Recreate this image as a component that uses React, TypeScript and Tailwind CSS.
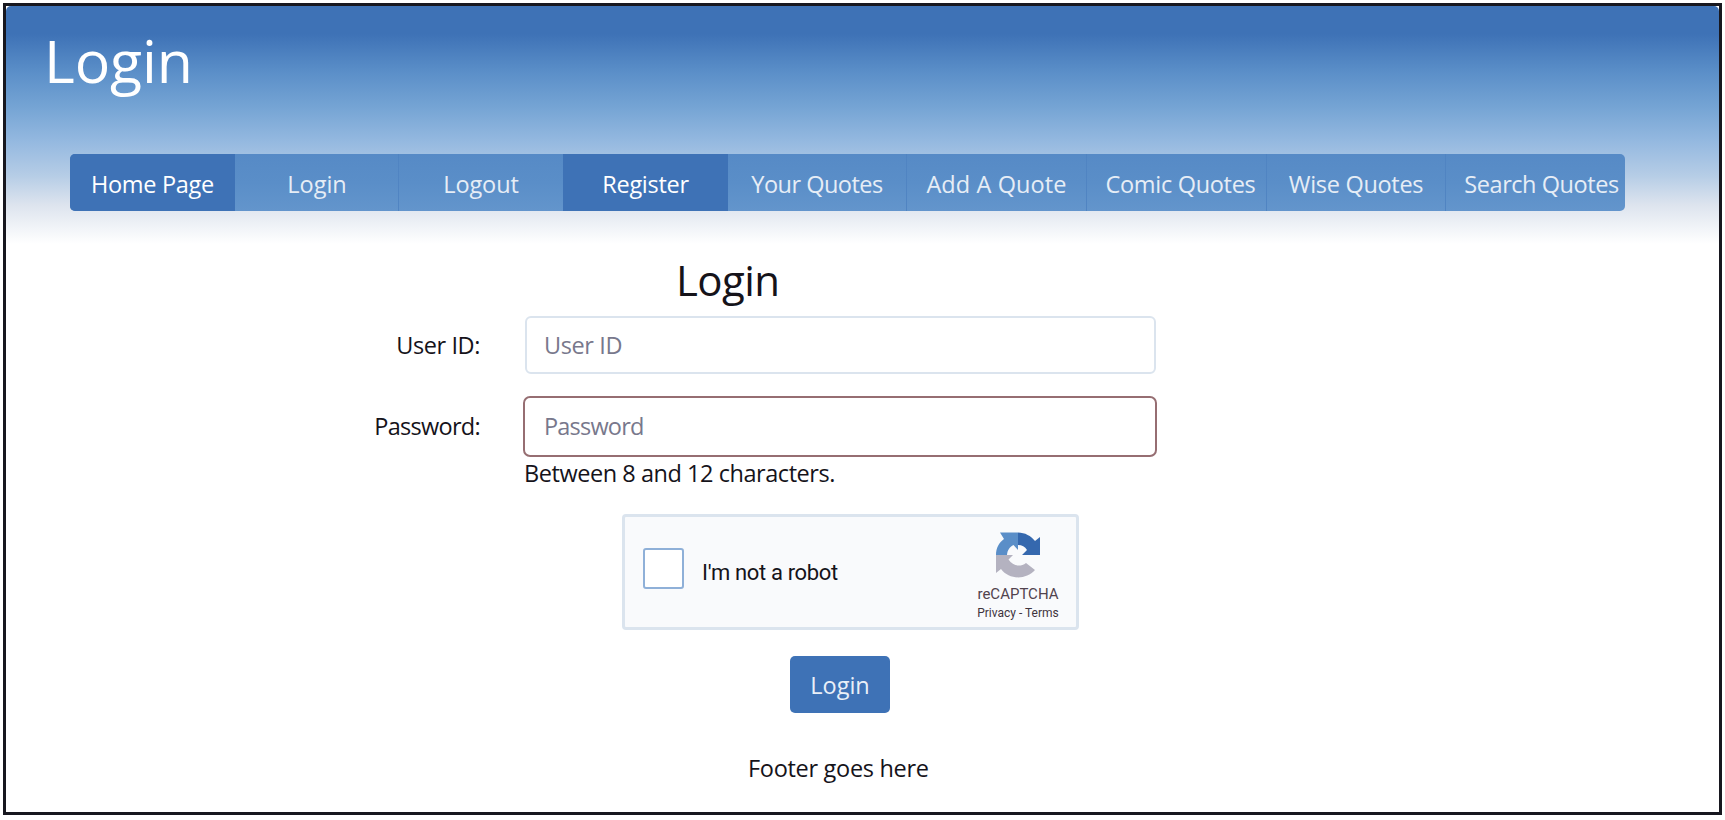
const navItems = [
  { label: 'Home Page', box: 'w-[165px] bg-[#3e72b6] text-white', text: 'tracking-[-0.3px]' },
  { label: 'Login', box: 'w-[164px] pl-px border-r border-[#5084c2] text-[#e6edf6]', text: '' },
  { label: 'Logout', box: 'w-[164px] text-[#e6edf6]', text: 'tracking-[-0.1px]' },
  { label: 'Register', box: 'w-[165px] bg-[#3e72b6] text-white', text: 'tracking-[-0.3px]' },
  { label: 'Your Quotes', box: 'w-[179px] border-r border-[#5084c2] text-[#e6edf6]', text: 'tracking-[-0.5px]' },
  { label: 'Add A Quote', box: 'w-[180px] border-r border-[#5084c2] text-[#e6edf6]', text: 'tracking-[0.1px]' },
  { label: 'Comic Quotes', box: 'w-[180px] pl-2 border-r border-[#5084c2] text-[#e6edf6]', text: 'tracking-[-0.3px]' },
  { label: 'Wise Quotes', box: 'w-[179px] border-r border-[#5084c2] text-[#e6edf6]', text: 'tracking-[-0.3px]' },
  { label: 'Search Quotes', box: 'w-[180px] pl-[11px] text-[#e6edf6]', text: 'tracking-[-0.45px]' },
];

function CaptchaLogo() {
  return (
    <svg viewBox="0 0 44 46" className="h-[46px] w-[46px]">
      <path fill="#5a8ec8" d="M4 .5H22V18L17.5 13C13.500 15 11.500 18 11 23H0C0 16 3 10.500 8 7Z" />
      <path fill="#3568ae" d="M22 .5C29 .5 35 4 39 9L44 5V23H26L31 18C29 14.500 26 13 22 13Z" />
      <path fill="#b4b2c0" d="M0 23H17L12.500 27.500C17 34 24 35.500 30 31L39 38C30 48 13 48 5 37L0 41Z" />
    </svg>
  );
}

export default function App() {
  return (
    <div className="h-[820px] w-[1725px] overflow-hidden bg-white p-[3px] font-['Open_Sans','Noto_Sans',sans-serif] text-[23.5px] leading-8 text-[#15131a]">
      <div className="h-[812px] w-[1719px] overflow-hidden border-[3px] border-[#17171f] bg-white">
        <header className="h-[240px] rounded-t-[5px] bg-[linear-gradient(to_bottom,#3e72b6_0px,#3e72b6_28px,#5a8ec8_65px,#75a4d4_101px,#95b9e0_136px,#b6cde6_170px,#dde4ee_199px,#ffffff_238px)]">
          <div className="flex h-[148px] pl-[38px] pt-[14px]">
            <h1 className="h-[80px] text-[59px] leading-[80px] tracking-[-0.1px] text-white">Login</h1>
          </div>
          <nav className="ml-[64px] flex h-[57px] w-[1555px] overflow-hidden rounded-[5px] bg-[linear-gradient(to_bottom,#568ac6,#5a8ec8_50%,#6395cc)]">
            {navItems.map((item) => (
              <a key={item.label} href="#" className={`flex shrink-0 items-center justify-center whitespace-nowrap pt-[3px] ${item.box}`}>
                <span className={item.text}>{item.label}</span>
              </a>
            ))}
          </nav>
        </header>

        <main>
          <h2 className="ml-[670px] h-[70px] pt-[4px] text-[42px] leading-[60px] tracking-[-0.6px]">Login</h2>
          <form onSubmit={(e) => e.preventDefault()}>
            <div className="flex h-[58px] items-center">
              <label htmlFor="user" className="w-[474px] text-right tracking-[-0.4px]">User ID:</label>
              <input
                id="user"
                placeholder="User ID"
                className="ml-[44.5px] h-[58px] w-[631px] rounded-[6px] border-2 border-[#dbe4ee] px-[17.5px] tracking-[-0.4px] outline-none placeholder:text-[#78788c]"
              />
            </div>
            <div className="mt-[21px] flex h-[62px] items-center">
              <label htmlFor="pass" className="w-[474px] text-right tracking-[-0.7px]">Password:</label>
              <input
                id="pass"
                type="password"
                placeholder="Password"
                className="ml-[43px] h-[61px] w-[634px] rounded-[7px] border-2 border-[#966e72] px-[19px] tracking-[-0.8px] outline-none placeholder:text-[#78788c]"
              />
            </div>
            <p className="ml-[518px] h-8 tracking-[-0.45px]">Between 8 and 12 characters.</p>

            <div className="ml-[616px] mt-[25px] flex h-[116px] w-[457px] rounded-[4px] border-[3px] border-[#dbe4ee] bg-[#f9fafc] pl-[18px]">
              <span className="mt-[31px] h-[41px] w-[41px] rounded-[3px] border-2 border-[#8fb0d8] bg-white" />
              <span className="ml-[18px] mt-[40px] whitespace-nowrap font-['Roboto',sans-serif] text-[22px] tracking-[-0.35px]">I'm not a robot</span>
              <div className="mr-[8px] ml-auto flex w-[100px] flex-col items-center pt-[15px] font-['Roboto',sans-serif] text-[#51434e]">
                <CaptchaLogo />
                <span className="mt-[6px] text-[15px] leading-[20px]">reCAPTCHA</span>
                <span className="text-[12px] leading-[18px] text-[#40343e]">Privacy - Terms</span>
              </div>
            </div>

            <button className="ml-[784px] mt-[26px] flex h-[57px] w-[100px] items-center justify-center rounded-[5px] bg-[#3e72b6] pt-[1px] text-[#e9eff8]">
              Login
            </button>
          </form>
        </main>

        <footer className="ml-[742px] mt-[39px] tracking-[-0.3px]">Footer goes here</footer>
      </div>
    </div>
  );
}
